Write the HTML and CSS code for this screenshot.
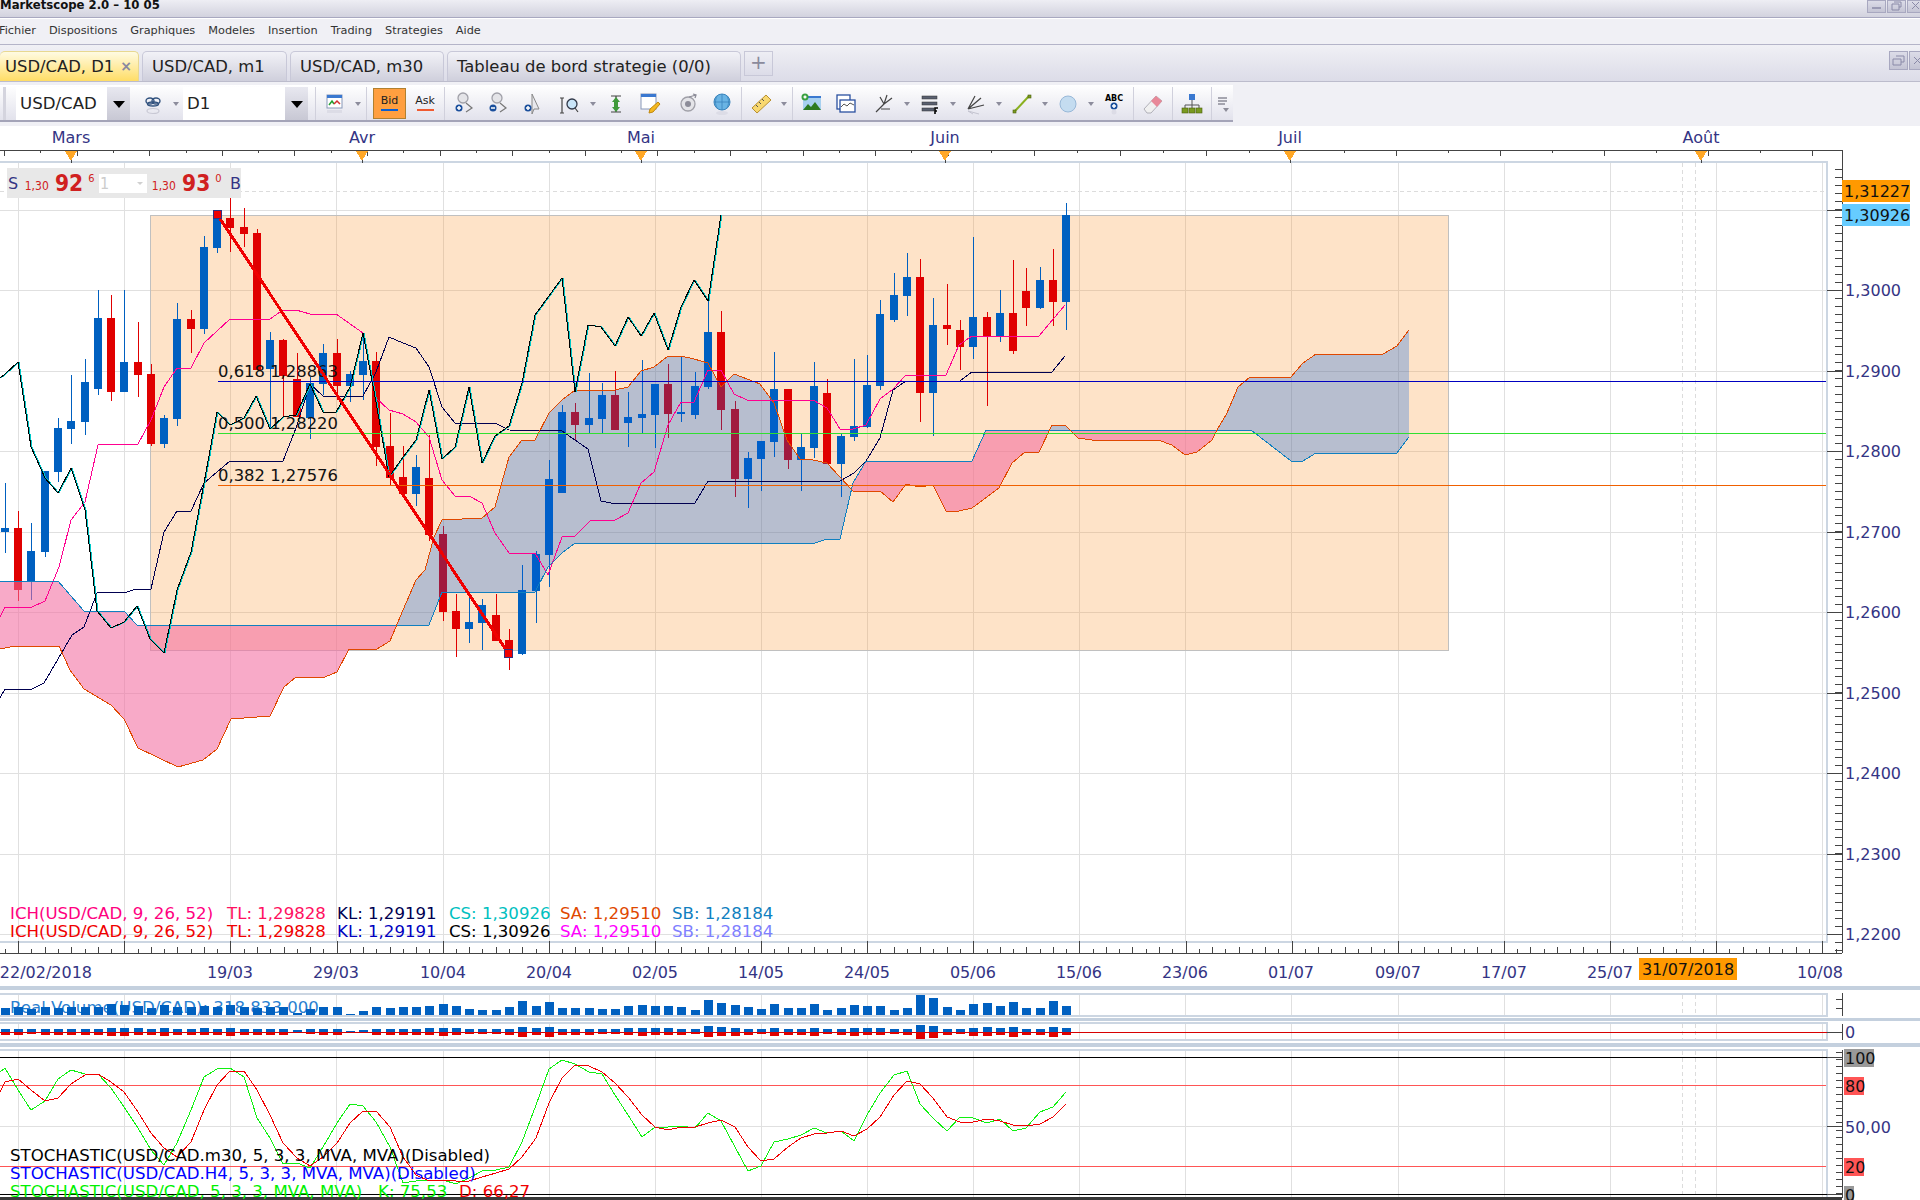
FILE: index.html
```html
<!DOCTYPE html>
<html lang="fr">
<head>
    <meta charset="UTF-8">
    <title>Marketscope 2.0</title>
    <link rel="stylesheet" href="styles.css">
</head>
<body>
    <div class="titlebar">
        <span class="app-title">Marketscope 2.0 – 10 05</span>
        <div class="win-btns">
            <span class="win-btn"><svg width="17" height="11" viewBox="0 0 17 11"><rect class="ico-win" x="4" y="6" width="9" height="2"/></svg></span>
            <span class="win-btn"><svg width="17" height="11" viewBox="0 0 17 11"><path class="ico-win-line" d="M6 1h7v5h-2M4 3h7v6H4z"/></svg></span>
            <span class="win-btn"><svg width="17" height="11" viewBox="0 0 17 11"><path class="ico-win-line" d="M4 1l7 7M11 1L4 8"/></svg></span>
        </div>
    </div>

    <div class="menubar">
        <span>Fichier</span>
        <span>Dispositions</span>
        <span>Graphiques</span>
        <span>Modeles</span>
        <span>Insertion</span>
        <span>Trading</span>
        <span>Strategies</span>
        <span>Aide</span>
    </div>

    <div class="tabbar">
        <div class="tab tab-active">USD/CAD, D1<span class="tab-close">×</span></div>
        <div class="tab tab-m1">USD/CAD, m1</div>
        <div class="tab tab-m30">USD/CAD, m30</div>
        <div class="tab tab-board">Tableau de bord strategie (0/0)</div>
        <div class="tab-add">+</div>
        <div class="tab-tools">
            <span class="win-btn"><svg width="17" height="17" viewBox="0 0 17 17"><path class="ico-win-line" d="M6 4h8v6h-3M3 7h8v6H3z"/></svg></span>
            <span class="win-btn"><svg width="17" height="17" viewBox="0 0 17 17"><path class="ico-win-line" d="M4 5l7 7M11 5l-7 7"/></svg></span>
        </div>
    </div>

    <div class="toolrow">
        <div class="toolbar">
            <div class="grip"></div>
            <div class="combo combo-symbol"><span class="combo-text">USD/CAD</span><span class="combo-arrow"></span></div>
            <div class="tool tool-first">
                <svg width="24" height="24" viewBox="0 0 24 24"><ellipse class="ico-link" cx="9" cy="9" rx="4" ry="3"/><ellipse class="ico-link" cx="15" cy="9" rx="4" ry="3"/><ellipse class="ico-link" cx="12" cy="12" rx="5.5" ry="2"/><ellipse class="ico-link-faint" cx="12" cy="19" rx="6" ry="2.5"/></svg>
            </div>
            <span class="caret"></span>
            <div class="combo combo-period"><span class="combo-text">D1</span><span class="combo-arrow"></span></div>
            <span class="sep"></span>
            <div class="tool">
                <svg width="24" height="24" viewBox="0 0 24 24"><rect class="ico-frame" x="4" y="3" width="15" height="13"/><rect class="ico-blue" x="4" y="3" width="15" height="3"/><path class="ico-green-line" d="M6 13l3-4 2 3"/><path class="ico-red-line" d="M11 12l3-3 3 3"/><rect class="ico-faint" x="4" y="18" width="15" height="3"/></svg>
            </div>
            <span class="caret"></span>
            <span class="sep"></span>
            <div class="side side-on"><span>Bid</span><i class="side-bar side-bar-bid"></i></div>
            <div class="side"><span>Ask</span><i class="side-bar side-bar-ask"></i></div>
            <span class="sep"></span>

            <div class="tool">
                <svg width="24" height="24" viewBox="0 0 24 24"><circle class="ico-lens" cx="11" cy="6" r="5"/><path class="ico-soft-line" d="M14 11l6 5-6 4"/><circle class="ico-bluedot" cx="7" cy="16" r="3.5"/><path class="ico-white-line" d="M5 16h4M7 14v4"/></svg>
            </div>
            <div class="tool">
                <svg width="24" height="24" viewBox="0 0 24 24"><circle class="ico-lens" cx="11" cy="6" r="5"/><path class="ico-soft-line" d="M14 11l6 5-6 4"/><circle class="ico-bluedot" cx="7" cy="16" r="3.5"/><path class="ico-white-line" d="M5 16h4"/></svg>
            </div>
            <div class="tool">
                <svg width="24" height="24" viewBox="0 0 24 24"><path class="ico-cursor" d="M12 2l7 15h-5l-2 5z"/><circle class="ico-bluedot" cx="8" cy="16" r="3.5"/><path class="ico-white-line" d="M6 16h4M8 14v4"/></svg>
            </div>
            <div class="tool tool-push">
                <svg width="24" height="24" viewBox="0 0 24 24"><circle class="ico-lens-blue" cx="14" cy="12" r="5"/><path class="ico-dark-line" d="M17 16l3 4M4 6v15M2 6h4M2 21h4"/></svg>
            </div>
            <span class="caret"></span>
            <div class="tool">
                <svg width="24" height="24" viewBox="0 0 24 24"><path class="ico-dark-line" d="M7 4h10M7 20h10M12 4v16"/><path class="ico-green-fill" d="M12 5l4 5h-2v5h2l-4 5-4-5h2v-5H8z"/></svg>
            </div>
            <div class="tool">
                <svg width="24" height="24" viewBox="0 0 24 24"><rect class="ico-frame" x="3" y="2" width="15" height="15"/><rect class="ico-blue" x="3" y="2" width="15" height="3"/><path class="ico-yellow-fill" d="M20 10l2 2-7 8-4 1 1-4z"/></svg>
            </div>
            <div class="tool tool-push">
                <svg width="24" height="24" viewBox="0 0 24 24"><circle class="ico-lens" cx="12" cy="12" r="7"/><circle class="ico-gray-fill" cx="12" cy="12" r="3"/><path class="ico-gray-line" d="M13 5l7-2M17 2l3 1-1 3"/></svg>
            </div>
            <div class="tool">
                <svg width="24" height="24" viewBox="0 0 24 24"><circle class="ico-globe" cx="12" cy="10" r="8"/><path class="ico-globe-line" d="M4 10h16M12 2v16M7 4c-2 4-2 8 0 12M17 4c2 4 2 8 0 12"/><ellipse class="ico-faint" cx="12" cy="21" rx="6" ry="2"/></svg>
            </div>
            <span class="sep"></span>

            <div class="tool">
                <svg width="24" height="24" viewBox="0 0 24 24"><path class="ico-ruler" d="M3 16L17 3l5 5L8 21z"/><path class="ico-dark-thin" d="M7 13l2 2M10 10l2 2M13 7l2 2"/></svg>
            </div>
            <span class="caret"></span>
            <span class="sep"></span>
            <div class="tool">
                <svg width="24" height="24" viewBox="0 0 24 24"><rect class="ico-sky" x="3" y="4" width="18" height="14"/><rect class="ico-blue" x="3" y="4" width="18" height="2"/><path class="ico-hills" d="M3 18l5-6 3 3 4-5 6 8z"/><circle class="ico-plus-green" cx="5" cy="5" r="3.5"/><path class="ico-white-line" d="M3.5 5h3M5 3.5v3"/></svg>
            </div>
            <div class="tool">
                <svg width="24" height="24" viewBox="0 0 24 24"><rect class="ico-frame-blue" x="3" y="3" width="13" height="14"/><rect class="ico-frame-blue" x="6" y="8" width="15" height="12"/><path class="ico-dark-thin" d="M7 15l3-3 3 2 3-3 4 2"/></svg>
            </div>
            <div class="tool tool-push">
                <svg width="24" height="24" viewBox="0 0 24 24"><path class="ico-dark-line" d="M4 20l8-8M12 12l-4-7M12 12l3-9M12 12l8-6M9 17h9"/></svg>
            </div>
            <span class="caret"></span>
            <div class="tool">
                <svg width="24" height="24" viewBox="0 0 24 24"><rect class="ico-bars" x="4" y="4" width="15" height="3"/><rect class="ico-bars" x="4" y="10" width="15" height="3"/><rect class="ico-bars" x="4" y="16" width="12" height="3"/><path class="ico-black-line" d="M17 22v-6h3M17 19h2"/></svg>
            </div>
            <span class="caret"></span>
            <div class="tool">
                <svg width="24" height="24" viewBox="0 0 24 24"><path class="ico-dark-line" d="M4 17l7-13M4 17l13-11M4 17l16-4"/><path class="ico-faint-line" d="M4 19l5 3M4 19l11 3"/></svg>
            </div>
            <span class="caret"></span>
            <div class="tool">
                <svg width="24" height="24" viewBox="0 0 24 24"><path class="ico-olive" d="M5 19L19 4"/><rect class="ico-olive-dot" x="3" y="18" width="3" height="3"/><rect class="ico-olive-dot" x="18" y="3" width="3" height="3"/></svg>
            </div>
            <span class="caret"></span>
            <div class="tool">
                <svg width="24" height="24" viewBox="0 0 24 24"><circle class="ico-ellipse" cx="12" cy="12" r="8"/></svg>
            </div>
            <span class="caret"></span>
            <div class="tool">
                <svg width="24" height="24" viewBox="0 0 24 24"><text class="ico-abc" x="12" y="9">ABC</text><circle class="ico-bluedot" cx="12" cy="14" r="3.5"/><path class="ico-white-line" d="M10 14h4M12 12v4"/><circle class="ico-faint" cx="12" cy="20" r="2.5"/></svg>
            </div>
            <span class="sep"></span>
            <div class="tool tool-erase">
                <svg width="24" height="24" viewBox="0 0 24 24"><path class="ico-eraser" d="M3 17L15 4l6 5L10 21H6z"/><path class="ico-eraser-pink" d="M15 4l6 5-5 6-6-6z"/></svg>
            </div>
            <span class="sep"></span>
            <div class="tool">
                <svg width="24" height="24" viewBox="0 0 24 24"><rect class="ico-blue" x="9" y="2" width="6" height="6"/><path class="ico-dark-thin" d="M12 8v5M5 13h14M5 13v3M12 13v3M19 13v3"/><rect class="ico-olive-dot" x="2" y="16" width="6" height="5"/><rect class="ico-olive-dot" x="9" y="16" width="6" height="5"/><rect class="ico-olive-dot" x="16" y="16" width="6" height="5"/></svg>
            </div>
            <span class="sep"></span>
            <div class="overflow">
                <svg width="14" height="20" viewBox="0 0 14 20"><path class="ico-gray-line" d="M2 4h9M2 7h9M2 10h7"/><path class="ico-gray-fill" d="M7 14h6l-3 4z"/></svg>
            </div>
        </div>
    </div>

    <div class="chart-area">
        <svg id="chart" class="chart" width="1920" height="1074" viewBox="0 126 1920 1074"></svg>

        <div class="quote">
            <span class="q-side">S</span>
            <span class="q-small q-small-s">1,30</span>
            <span class="q-big">92</span>
            <span class="q-sup">6</span>
            <span class="q-input">1<i class="q-caret"></i></span>
            <span class="q-small">1,30</span>
            <span class="q-big">93</span>
            <span class="q-sup">0</span>
            <span class="q-side q-side-b">B</span>
        </div>

        <div class="legend legend-ich">
            <div class="legend-row">
                <span class="c-pink">ICH(USD/CAD, 9, 26, 52)</span>
                <span class="c-rose">TL: 1,29828</span>
                <span class="c-navy">KL: 1,29191</span>
                <span class="c-teal">CS: 1,30926</span>
                <span class="c-orange">SA: 1,29510</span>
                <span class="c-sky">SB: 1,28184</span>
            </div>
            <div class="legend-row">
                <span class="c-red">ICH(USD/CAD, 9, 26, 52)</span>
                <span class="c-red">TL: 1,29828</span>
                <span class="c-blue2">KL: 1,29191</span>
                <span class="c-black">CS: 1,30926</span>
                <span class="c-magenta">SA: 1,29510</span>
                <span class="c-lilac">SB: 1,28184</span>
            </div>
        </div>

        <div class="legend legend-stoch">
            <div class="c-black">STOCHASTIC(USD/CAD.m30, 5, 3, 3, MVA, MVA)(Disabled)</div>
            <div class="c-blue">STOCHASTIC(USD/CAD.H4, 5, 3, 3, MVA, MVA)(Disabled)</div>
            <div class="stoch-last">
                <span class="stoch-name c-lime">STOCHASTIC(USD/CAD, 5, 3, 3, MVA, MVA)</span>
                <span class="stoch-k c-lime">K: 75,53</span>
                <span class="c-red">D: 66,27</span>
            </div>
        </div>
    </div>

    <script src="chart.js"></script>
</body>
</html>
```

FILE: styles.css
```css
html, body {
    margin: 0;
    padding: 0;
}

body {
    width: 1920px;
    height: 1200px;
    overflow: hidden;
    background: #f0f0f5;
    font-family: "DejaVu Sans", sans-serif;
    color: #222;
}

/* top bars */
.titlebar {
    height: 17px;
    display: flex;
    justify-content: space-between;
    overflow: hidden;
    background: linear-gradient(#eeeef4, #d2d2de);
    border-bottom: 1px solid #a8a8c0;
}

.app-title {
    font-size: 11.7px;
    font-weight: bold;
    line-height: 10px;
    color: #111;
}

.win-btns {
    display: flex;
    gap: 1px;
    width: 53px;
    overflow: hidden;
    flex: none;
}

.win-btn {
    flex: none;
    width: 17px;
    background: linear-gradient(#dcdce8, #c4c4d4);
    border: 1px solid #a8a8c0;
    display: block;
    line-height: 0;
}

.titlebar .win-btn {
    height: 11px;
}

.ico-win { fill: #9a9ab4; }
.ico-win-line { fill: none; stroke: #8a8aa8; stroke-width: 1; }

.menubar {
    height: 23px;
    padding-bottom: 2px;
    display: flex;
    gap: 13px;
    align-items: center;
    background: #f0f0f5;
    border-top: 1px solid #fff;
    border-bottom: 1px solid #b4b4c8;
    font-size: 11.3px;
    color: #333;
}

.menubar span:first-child {
    margin-left: -1px;
}

.tabbar {
    height: 36px;
    display: flex;
    align-items: flex-end;
    gap: 3px;
    background: linear-gradient(#f0f0f5, #dcdce8);
    border-bottom: 1px solid #bcbccc;
    position: relative;
    font-size: 16.4px;
}

.tab {
    height: 28px;
    box-sizing: content-box;
    padding-left: 9px;
    padding-bottom: 1px;
    display: flex;
    align-items: center;
    background: linear-gradient(#f2f2f7, #cfcfdc);
    border: 1px solid #c8c8d8;
    border-bottom: none;
    border-radius: 5px 5px 0 0;
    white-space: nowrap;
}

.tab-active {
    width: 133px;
    padding-left: 5px;
    justify-content: space-between;
    background: linear-gradient(#fffbe2, #ffdd66);
    border-color: #e8d890;
    border-left: none;
}

.tab-m1 { width: 134px; }
.tab-m30 { width: 143px; }
.tab-board { width: 283px; }

.tab-close {
    margin-right: 6px;
    font-size: 14px;
    font-weight: bold;
    color: #8888a0;
}

.tab-add {
    width: 27px;
    height: 23px;
    margin-bottom: 5px;
    text-align: center;
    line-height: 21px;
    font-size: 20px;
    color: #8a8a9c;
    border: 1px solid #c8c8d8;
    background: linear-gradient(#eeeef4, #dcdce8);
}

.tab-tools {
    position: absolute;
    right: -8px;
    top: 6px;
    display: flex;
    gap: 1px;
}

.toolrow {
    height: 44px;
    padding-top: 3px;
    box-sizing: border-box;
    background: #f0f0f5;
}

.toolbar {
    width: 1233px;
    height: 33px;
    padding-top: 2px;
    display: flex;
    align-items: center;
    background: linear-gradient(#fff, #e2e2ec);
    border-bottom: 2px solid #a4a4b8;
}

.grip {
    width: 16px;
    height: 33px;
    flex: none;
    background: linear-gradient(90deg, transparent 3px, #d4d4de 3px, #d4d4de 6px, transparent 6px);
}

.combo {
    height: 33px;
    display: flex;
    background: #fff;
    flex: none;
    justify-content: space-between;
}

.combo-symbol {
    width: 114px;
}

.combo-period {
    width: 125px;
    margin-left: 1px;
    margin-right: 5px;
}

.combo-text {
    font-size: 16.6px;
    line-height: 33px;
    padding-left: 4px;
}

.combo-arrow {
    width: 23px;
    position: relative;
    background: linear-gradient(#e8e8f0, #c8c8d4);
}

.combo-arrow::after {
    content: "";
    position: absolute;
    left: 6px;
    top: 14px;
    border: 6px solid transparent;
    border-top: 7px solid #000;
    border-bottom: none;
}

.tool {
    width: 34px;
    height: 33px;
    flex: none;
    display: flex;
    align-items: center;
    justify-content: center;
}

.tool-first {
    margin-left: 6px;
}

.tool-push {
    margin-left: 4px;
}

.caret {
    width: 12px;
    height: 8px;
    flex: none;
    position: relative;
}

.caret::after {
    content: "";
    position: absolute;
    left: 3px;
    top: 2px;
    border: 3px solid transparent;
    border-top: 4px solid #8c8c9c;
    border-bottom: none;
}

.sep {
    width: 1px;
    height: 33px;
    flex: none;
    margin: 0 2px;
    background: #d0d0dc;
}

.side {
    width: 34px;
    height: 31px;
    margin-left: 2px;
    flex: none;
    display: flex;
    flex-direction: column;
    align-items: center;
    font-size: 11px;
    line-height: 13px;
    padding-top: 6px;
    box-sizing: border-box;
}

.side-on {
    margin-left: 4px;
    width: 33px;
    background: #ff9f40;
    outline: 1px solid #b08030;
    outline-offset: -1px;
}

.side-bar {
    display: block;
    width: 17px;
    height: 2px;
    margin-top: 2px;
}

.side-bar-bid { background: #0a5ed0; }
.side-bar-ask { background: #f05a30; }

.overflow {
    width: 18px;
    display: flex;
    justify-content: center;
    flex: none;
}

/* toolbar icon paints */
.ico-link { fill: none; stroke: #33537f; stroke-width: 1.4; }
.ico-link-faint { fill: none; stroke: #c8c8d4; stroke-width: 1.2; }
.ico-frame { fill: #fff; stroke: #8898b8; }
.ico-frame-blue { fill: #fff; stroke: #2a50a0; stroke-width: 1.3; }
.ico-blue { fill: #3a78d0; }
.ico-green-line { fill: none; stroke: #20a030; stroke-width: 1.5; }
.ico-red-line { fill: none; stroke: #d03030; stroke-width: 1.5; }
.ico-faint { fill: #dcdce6; }
.ico-faint-line { fill: none; stroke: #c4c4d0; }
.ico-lens { fill: #e4e4e8; stroke: #a0a0a8; stroke-width: 1.3; }
.ico-lens-blue { fill: #c8e4f8; stroke: #303848; stroke-width: 1.3; }
.ico-dark-line { fill: none; stroke: #444; stroke-width: 1.2; }
.ico-soft-line { fill: none; stroke: #777; stroke-width: 1.2; }
.ico-dark-thin { fill: none; stroke: #555; stroke-width: 1; }
.ico-black-line { fill: none; stroke: #000; stroke-width: 1.6; }
.ico-white-line { fill: none; stroke: #fff; stroke-width: 1.5; }
.ico-bluedot { fill: #1a4f9c; }
.ico-cursor { fill: #e8e8ec; stroke: #888; }
.ico-green-fill { fill: #3f9a3a; }
.ico-yellow-fill { fill: #f4b820; stroke: #c08810; }
.ico-gray-fill { fill: #8c8c98; }
.ico-gray-line { fill: none; stroke: #8c8c98; stroke-width: 1.3; }
.ico-globe { fill: #6ab4e4; stroke: #3a84bc; }
.ico-globe-line { fill: none; stroke: #3a84bc; stroke-width: .8; }
.ico-ruler { fill: #f8d870; stroke: #b89030; }
.ico-sky { fill: #a8d0f0; }
.ico-hills { fill: #2c7a20; }
.ico-plus-green { fill: #3aa040; }
.ico-bars { fill: #5a6070; stroke: #333; stroke-width: .5; }
.ico-olive { fill: none; stroke: #8ab020; stroke-width: 2; }
.ico-olive-dot { fill: #7a9a20; stroke: #4c6010; stroke-width: .6; }
.ico-ellipse { fill: #c4dcf0; stroke: #98b8d8; }
.ico-abc { font-size: 8px; font-weight: bold; text-anchor: middle; fill: #000; }
.ico-eraser { fill: #f0f0f0; stroke: #b0b0b8; }
.ico-eraser-pink { fill: #e88898; }

/* chart */
.chart-area {
    position: relative;
    height: 1074px;
    background: #fff;
    overflow: hidden;
}

.chart {
    display: block;
    font-family: "DejaVu Sans", sans-serif;
    font-size: 16px;
}

.chart * {
    shape-rendering: crispEdges;
}

.grid { stroke: #e0e0e0; stroke-width: 1; }
.dash { stroke: #dcdcdc; stroke-width: 1; stroke-dasharray: 4 3; }
.pane-border { fill: none; stroke: #ccd6e2; stroke-width: 2; }
.band { fill: #c4d0de; }
.axis { stroke: #444; stroke-width: 1; }
.axis-text { fill: #343484; }
.marker-tri { fill: #ffa726; }
.peach { fill: rgba(250, 150, 50, .27); stroke: #c0c0c0; stroke-width: 1; }
.up { fill: #0060c0; }
.down { fill: #e00000; }
.cloud-up { fill: rgba(0, 93, 225, .28); }
.cloud-down { fill: rgba(242, 105, 158, .57); }
.ln { fill: none; stroke-width: 1; }
.ln-sa { stroke: #e04800; }
.ln-sb { stroke: #1080c0; }
.ln-tl { stroke: #ff0090; }
.ln-kl { stroke: #000050; }
.ln-cs { stroke: #000; }
.ln-cs2 { stroke: #00c8c8; }
.fib-618 { stroke: #0000c0; }
.fib-500 { stroke: #30e030; }
.fib-382 { stroke: #f06000; }
.fib-text { fill: #111; font-size: 16.4px; }
.retrace { stroke: #f00000; stroke-width: 3; }
.retrace-end { fill: #f00000; stroke: #333080; stroke-width: 1; }
.tag-orange { fill: #ff9900; }
.tag-blue { fill: #66ccff; }
.tag-gray { fill: #999; }
.tag-red { fill: #ff5555; }
.tag-text { fill: #111; }
.vol-text { fill: #2a7fd0; font-size: 16.6px; }
.stoch-level { stroke: #ff5555; stroke-width: 1; }
.stoch-edge { stroke: #000; stroke-width: 1; }
.zero-line { stroke: #d80000; stroke-width: 1; }
.st-k { stroke: #10f010; }
.st-d { stroke: #f00000; }
.statusline { fill: #3a3a3a; }

/* quote box over the chart */
.quote {
    position: absolute;
    left: 7px;
    top: 42px;
    width: 234px;
    height: 30px;
    display: flex;
    align-items: center;
    background: #e8e8e8;
    color: #d02020;
    font-stretch: condensed;
}

.q-side {
    width: 11px;
    padding-left: 1px;
    font-size: 16px;
    color: #343484;
    font-stretch: normal;
}

.q-side-b {
    margin-left: 3px;
}

.q-small {
    font-size: 12px;
    width: 31px;
    margin-top: 5px;
}

.q-small-s {
    margin-left: 6px;
}

.q-big {
    font-size: 22.5px;
    font-weight: bold;
    width: 32px;
    margin-top: -1px;
}

.q-sup {
    font-size: 11px;
    width: 11px;
    margin-top: -9px;
    padding-left: 2px;
}

.q-input {
    width: 49px;
    height: 19px;
    margin-right: 5px;
    background: #fff;
    color: #ccc;
    font-size: 16px;
    line-height: 19px;
    padding-left: 1px;
    position: relative;
    box-sizing: border-box;
}

.q-caret {
    position: absolute;
    right: 4px;
    top: 8px;
    border: 3px solid transparent;
    border-top: 3px solid #d0d0d0;
    border-bottom: none;
}

/* indicator legends */
.legend {
    position: absolute;
    left: 10px;
    font-size: 16.6px;
    line-height: 18px;
    white-space: nowrap;
}

.legend-ich {
    top: 779px;
}

.legend-stoch {
    top: 1021px;
}

.legend-row {
    display: grid;
    grid-template-columns: 217px 110px 112px 111px 112px auto;
}

.stoch-last {
    display: flex;
}

.stoch-name {
    width: 368px;
}

.stoch-k {
    width: 81px;
}

.c-pink { color: #ff0080; }
.c-rose { color: #ff1060; }
.c-navy { color: #000050; }
.c-teal { color: #00c0c0; }
.c-orange { color: #e04800; }
.c-sky { color: #1080c0; }
.c-red { color: #f00000; }
.c-blue2 { color: #0000c0; }
.c-black { color: #000; }
.c-magenta { color: #ff00ff; }
.c-lilac { color: #8080ff; }
.c-blue { color: #0000ff; }
.c-lime { color: #00f000; }
```

FILE: chart.js
```js
// candle: [dir, high, low, top, bottom] in page pixels, dir 1 = up (blue)
var candles = [
    [1,483,553,528,532],[0,511,601,528,590],[1,523,600,551,581],[1,471,557,471,552],[1,418,482,428,472],
    [1,375,444,421,429],[1,359,435,382,422],[1,290,395,318,389],[0,295,401,318,392],[1,290,392,362,392],
    [0,322,397,362,375],[0,364,446,374,444],[1,415,448,418,444],[1,303,426,319,419],[0,310,353,319,329],
    [1,236,334,247,329],[1,210,253,210,248],[0,197,252,218,228],[0,208,247,227,234],[0,229,370,233,370],
    [1,332,429,340,369],[0,339,417,340,376],[0,353,417,379,417],[1,377,439,383,418],[1,344,395,353,384],
    [0,339,400,353,386],[1,371,402,374,386],[1,333,400,361,375],[0,352,466,361,447],[0,413,485,446,478],
    [0,446,495,477,494],[1,455,506,467,494],[0,435,541,478,535],[0,526,621,534,612],[0,594,657,611,629],
    [1,592,643,622,629],[1,599,650,605,623],[0,594,641,615,641],[0,629,670,640,654],[1,565,655,590,654],
    [1,551,623,554,591],[1,460,587,479,555],[1,405,493,412,493],[0,403,440,412,425],[1,373,433,418,425],
    [1,383,433,395,419],[0,371,430,395,430],[1,392,447,417,423],[1,360,433,414,418],[1,384,448,384,415],
    [0,364,438,384,414],[1,357,422,412,414],[1,372,419,386,415],[1,301,389,332,387],[0,311,430,332,410],
    [0,401,497,409,479],[1,452,508,458,479],[1,441,491,441,459],[1,352,457,389,442],[0,389,469,389,460],
    [1,434,491,447,460],[1,362,458,386,448],[0,379,464,393,464],[1,434,497,436,464],[1,359,441,426,437],
    [1,355,428,385,427],[1,300,390,314,386],[1,273,322,295,320],[1,253,316,277,296],[0,259,422,277,393],
    [1,298,436,325,393],[0,284,345,325,329],[0,320,370,330,347],[1,237,359,317,347],[0,312,406,317,336],
    [1,290,342,313,336],[0,260,354,313,351],[0,268,326,291,308],[1,267,309,280,308],[0,249,326,280,302],
    [1,203,330,215,302]
];

var volume = [7,8,6,8,7,8,8,8,11,10,9,7,10,8,8,9,8,10,8,7,8,8,2,6,8,8,1,4,8,7,8,8,9,11,9,6,5,5,8,14,
    9,13,7,7,7,6,6,9,10,9,9,8,5,15,12,10,8,6,11,7,7,11,5,7,10,9,9,5,7,20,17,8,5,11,12,9,13,7,7,14,9];

var stochK = [1068,1090,1110,1101,1079,1070,1074,1074,1088,1107,1128,1150,1165,1143,1110,1077,1069,1068,1077,1118,
    1138,1164,1163,1168,1147,1123,1104,1106,1122,1147,1183,1181,1180,1180,1184,1178,1171,1170,1167,1142,
    1105,1069,1060,1064,1072,1074,1095,1115,1137,1127,1127,1126,1128,1113,1121,1147,1171,1166,1142,
    1139,1135,1128,1133,1131,1141,1115,1093,1075,1071,1104,1118,1131,1117,1118,1123,1119,1131,1128,1112,1107,1092];

var stochD = [1082,1079,1090,1101,1098,1084,1075,1074,1082,1092,1112,1133,1148,1157,1142,1110,1085,1071,1071,1090,
    1115,1143,1158,1166,1157,1143,1123,1111,1111,1127,1157,1175,1181,1180,1181,1181,1177,1173,1169,1157,
    1138,1103,1078,1065,1066,1072,1083,1097,1115,1127,1130,1127,1127,1123,1120,1127,1147,1161,1159,
    1147,1138,1134,1133,1131,1136,1129,1117,1095,1081,1084,1098,1117,1122,1122,1119,1121,1125,1126,1124,1117,1104];

var senkouA = [[0,649],[15,646],[59,646],[70,670],[84,689],[111,705],[124,719],[138,748],[178,767],[203,760],[217,749],
    [231,719],[270,716],[284,687],[296,677],[325,677],[337,672],[349,649],[377,649],[390,641],[403,610],[416,580],[425,570],
    [434,537],[442,520],[482,518],[495,507],[509,457],[522,440],[535,440],[549,413],[562,400],[575,390],[615,390],[628,387],
    [641,371],[654,367],[668,356],[681,356],[694,359],[708,363],[721,387],[734,374],[760,384],[774,403],[787,440],[800,459],
    [813,460],[827,463],[853,491],[880,491],[893,502],[906,484],[919,487],[933,485],[946,511],[959,511],[972,508],[999,488],
    [1012,463],[1025,452],[1039,452],[1052,425],[1065,425],[1078,438],[1092,440],[1158,440],[1172,445],[1185,455],[1197,452],
    [1212,440],[1217,430],[1227,413],[1238,387],[1250,377],[1291,377],[1303,363],[1316,354],[1383,354],[1397,346],[1409,330]];

var senkouB = [[0,581],[58,581],[84,611],[124,611],[137,625],[429,625],[442,592],[535,592],[548,567],[562,553],[575,543],
    [815,543],[827,539],[840,539],[853,483],[866,461],[972,461],[986,430],[1251,430],[1291,461],[1303,461],[1316,453],[1397,453],[1409,437]];

var tenkan = [[0,617],[5,607],[32,607],[45,601],[59,567],[71,520],[85,502],[98,445],[138,444],[151,420],[164,387],[177,368],
    [191,368],[204,343],[230,319],[270,319],[283,310],[296,310],[310,314],[336,314],[363,333],[376,398],[389,410],[403,414],
    [416,422],[429,437],[442,480],[455,496],[469,496],[482,503],[495,533],[509,553],[535,553],[548,575],[562,537],[575,536],
    [590,521],[615,520],[628,513],[641,483],[654,472],[668,425],[681,402],[694,402],[708,370],[721,370],[734,394],[747,400],
    [813,400],[827,408],[840,429],[853,429],[866,425],[880,399],[893,389],[906,375],[946,375],[959,345],[972,336],[1039,336],[1065,305]];

var kijun = [[0,698],[5,689],[32,689],[44,683],[72,635],[84,627],[97,593],[127,592],[136,589],[151,589],[164,532],[177,511],
    [191,511],[204,483],[230,461],[283,461],[296,428],[310,384],[323,396],[363,396],[376,372],[389,337],[403,343],[416,348],
    [429,367],[442,407],[455,423],[495,423],[509,430],[562,431],[588,449],[601,501],[611,503],[695,503],[708,481],[840,481],
    [854,473],[866,461],[880,438],[893,390],[906,381],[960,381],[972,372],[1052,372],[1065,356]];

var chikou = [[0,378],[5,374],[18,362],[31,447],[45,478],[58,493],[71,468],[85,510],[97,611],[111,628],[124,622],[137,606],
    [150,639],[164,653],[177,590],[191,552],[204,483],[217,412],[230,425],[244,418],[256,396],[270,429],[283,417],[296,415],
    [310,384],[323,412],[336,412],[350,387],[363,333],[376,402],[389,477],[403,457],[416,440],[429,390],[442,459],[455,447],
    [469,387],[482,463],[495,436],[509,426],[522,383],[535,315],[562,278],[575,392],[588,325],[601,327],[615,346],[628,317],
    [641,336],[654,313],[668,350],[681,307],[694,280],[708,301],[721,215]];

var out = [];

function candleX(k) { return Math.round(4.93 + 13.265 * k); }
function gridX(k) { return Math.round(18.2 + 106.1 * k); }

function line(cls, x1, y1, x2, y2) {
    out.push('<line class="' + cls + '" x1="' + x1 + '" y1="' + y1 + '" x2="' + x2 + '" y2="' + y2 + '"/>');
}
function rect(cls, x, y, w, h) {
    out.push('<rect class="' + cls + '" x="' + x + '" y="' + y + '" width="' + w + '" height="' + h + '"/>');
}
function text(cls, x, y, s, anchor) {
    out.push('<text class="' + cls + '" x="' + x + '" y="' + y + '" text-anchor="' + (anchor || 'start') + '">' + s + '</text>');
}
function poly(cls, pts, dx) {
    var p = pts.map(function (a) { return (a[0] + (dx || 0)) + ',' + a[1]; }).join(' ');
    out.push('<polyline class="ln ' + cls + '" points="' + p + '"/>');
}
function at(pts, x) {
    for (var i = 1; i < pts.length; i++) {
        if (x <= pts[i][0]) {
            var a = pts[i - 1], b = pts[i];
            return a[1] + (b[1] - a[1]) * (x - a[0]) / (b[0] - a[0]);
        }
    }
    return pts[pts.length - 1][1];
}

// vertical grid and dashes for one pane
function verticals(y1, y2) {
    for (var k = 0; k < 18; k++) line('grid', gridX(k), y1, gridX(k), y2);
    line('dash', 1682, y1, 1682, y2);
    line('dash', 1695, y1, 1695, y2);
}

function drawMainGrid() {
    verticals(163, 941);
    for (var y = 0; y < 10; y++) {
        var gy = Math.round(209.5 + y * 80.5);
        line('grid', 0, gy, 1826, gy);
    }
    line('dash', 0, 191, 1826, 191);
    out.push('<path class="pane-border" d="M0 162H1827V942H0"/>');
}

function drawTopAxis() {
    var months = [['Mars', 71], ['Avr', 362], ['Mai', 641], ['Juin', 945], ['Juil', 1290], ['Août', 1701]];
    var x = 4, i = 0;
    while (x < 1842) {
        line('axis', Math.round(x), 150, Math.round(x), i % 2 ? 153 : 156);
        x += x < 945 ? 36.3 : (x < 1290 ? 43 : 52);
        i++;
    }
    months.forEach(function (m) {
        text('axis-text', m[1], 143, m[0], 'middle');
        line('axis', m[1], 150, m[1], 163);
        out.push('<polygon class="marker-tri" points="' + (m[1] - 6) + ',151 ' + (m[1] + 6) + ',151 ' + m[1] + ',161"/>');
    });
    line('axis', 0, 150, 1842, 150);
}

function drawBottomAxis() {
    var labels = ['19/03', '29/03', '10/04', '20/04', '02/05', '14/05', '24/05', '05/06', '15/06', '23/06', '01/07', '09/07', '17/07', '25/07'];
    for (var i = 0; i < 139; i++) {
        var x = Math.round(18.2 + i * 13.265 - 13.265);
        line('axis', x, i % 8 == 1 ? 941 : (i % 2 ? 947 : 949), x, 953);
    }
    line('axis', 0, 953, 1842, 953);
    text('axis-text', 92, 978, '22/02/2018', 'end');
    labels.forEach(function (s, i) { text('axis-text', gridX(i + 2), 978, s, 'middle'); });
    text('axis-text', 1820, 978, '10/08', 'middle');
    rect('tag-orange', 1639, 958, 98, 22);
    text('tag-text', 1688, 975, '31/07/2018', 'middle');
}

function drawRightAxis() {
    line('axis', 1842, 150, 1842, 953);
    for (var y = 169; y < 953; y += 8.05) line('axis', 1835, Math.round(y), 1842, Math.round(y));
    for (var i = 0; i < 10; i++) {
        var gy = Math.round(209.5 + i * 80.5);
        line('axis', 1827, gy, 1842, gy);
        if (i > 0) text('axis-text', 1845, gy + 6, '1,' + (3100 - i * 100));
    }
}

function drawPeach() {
    rect('peach', 150, 215, 1298, 435);
}

function drawCandles() {
    candles.forEach(function (c, k) {
        var x = candleX(k), cls = c[0] ? 'up' : 'down';
        rect(cls, x, c[1], 1, c[2] - c[1]);
        rect(cls, x - 4, c[3], 8, c[4] - c[3]);
    });
}

// the cloud is split where the two spans cross, colour depends on which is on top
function drawCloud() {
    var upper = [], lower = [], state = null;
    function flush() {
        if (upper.length) {
            var pts = upper.concat(lower.reverse()).map(function (p) { return p.join(','); }).join(' ');
            out.push('<polygon class="' + (state ? 'cloud-up' : 'cloud-down') + '" points="' + pts + '"/>');
        }
        upper = []; lower = [];
    }
    for (var x = 0; x <= 1409; x++) {
        var a = at(senkouA, x), b = at(senkouB, x), s = a < b;
        if (s !== state) {
            if (upper.length) { upper.push([x, a]); lower.push([x, b]); }
            flush();
            state = s;
        }
        upper.push([x, a]);
        lower.push([x, b]);
    }
    flush();
}

function drawIchimoku() {
    poly('ln-kl', kijun);
    poly('ln-tl', tenkan);
    poly('ln-sb', senkouB);
    poly('ln-sa', senkouA);
    poly('ln-cs2', chikou, 1);
    poly('ln-cs', chikou);
}

function drawFibo() {
    line('fib-618', 218, 381, 1826, 381);
    line('fib-500', 218, 433, 1826, 433);
    line('fib-382', 218, 485, 1826, 485);
    text('fib-text', 218, 377, '0,618 1,28863');
    text('fib-text', 218, 429, '0,500 1,28220');
    text('fib-text', 218, 481, '0,382 1,27576');
    line('retrace', 217, 214, 508, 653);
    rect('retrace-end', 213, 210, 8, 8);
    rect('retrace-end', 504, 649, 8, 8);
}

function drawPriceTags() {
    rect('tag-orange', 1842, 180, 68, 22);
    text('tag-text', 1844, 197, '1,31227');
    rect('tag-blue', 1842, 204, 68, 22);
    text('tag-text', 1844, 221, '1,30926');
}

function drawBands() {
    rect('band', 0, 986, 1920, 4);
    rect('band', 0, 1018, 1920, 3);
    rect('band', 0, 1043, 1920, 4);
}

function drawVolume() {
    verticals(995, 1015);
    out.push('<path class="pane-border" d="M0 994H1827V1016H0"/>');
    text('vol-text', 10, 1013, 'Real Volume(USD/CAD): 318 833 000');
    volume.forEach(function (v, k) { rect('up', candleX(k) - 4, 1015 - v, 9, v); });
    line('axis', 1842, 993, 1842, 1016);
    line('axis', 1836, 999, 1842, 999);
    line('axis', 1836, 1008, 1842, 1008);
}

function drawHistogram() {
    verticals(1024, 1040);
    out.push('<path class="pane-border" d="M0 1023H1827V1040H0"/>');
    volume.forEach(function (v, k) {
        var up = Math.round(v * 0.3) + 1, dn = Math.round(v * 0.36);
        rect('up', candleX(k) - 4, 1032 - up, 9, up);
        rect('down', candleX(k) - 4, 1032, 9, dn);
    });
    line('zero-line', 0, 1032, 1827, 1032);
    line('axis', 1842, 1024, 1842, 1040);
    line('axis', 1827, 1032, 1842, 1032);
    text('axis-text', 1845, 1038, '0');
}

function drawStochastic() {
    verticals(1051, 1197);
    out.push('<path class="pane-border" d="M0 1050H1827V1200"/>');
    line('grid', 0, 1126, 1826, 1126);
    line('stoch-edge', 0, 1057, 1827, 1057);
    line('stoch-edge', 0, 1194, 1827, 1194);
    line('stoch-level', 0, 1085, 1826, 1085);
    line('stoch-level', 0, 1166, 1826, 1166);
    var k = [[0, 1072]], d = [[0, 1092]];
    stochK.forEach(function (y, i) { k.push([candleX(i), y]); });
    stochD.forEach(function (y, i) { d.push([candleX(i), y]); });
    poly('st-k', k);
    poly('st-d', d);

    line('axis', 1842, 1050, 1842, 1198);
    for (var y = 1052; y < 1198; y += 7.05) line('axis', 1836, Math.round(y), 1842, Math.round(y));
    [1057, 1126, 1194].forEach(function (y) { line('axis', 1827, y, 1842, y); });
    rect('tag-gray', 1844, 1049, 30, 18);
    text('tag-text', 1845, 1064, '100');
    rect('tag-red', 1844, 1077, 20, 18);
    text('tag-text', 1845, 1092, '80');
    text('axis-text', 1845, 1133, '50,00');
    rect('tag-red', 1844, 1158, 20, 18);
    text('tag-text', 1845, 1173, '20');
    rect('tag-gray', 1844, 1186, 10, 14);
    text('tag-text', 1845, 1201, '0');
    rect('statusline', 0, 1197, 1842, 3);
}

drawMainGrid();
drawPeach();
drawTopAxis();
drawRightAxis();
drawCandles();
drawCloud();
drawIchimoku();
drawFibo();
drawBottomAxis();
drawPriceTags();
drawBands();
drawVolume();
drawHistogram();
drawStochastic();

document.getElementById('chart').innerHTML = out.join('');
```
